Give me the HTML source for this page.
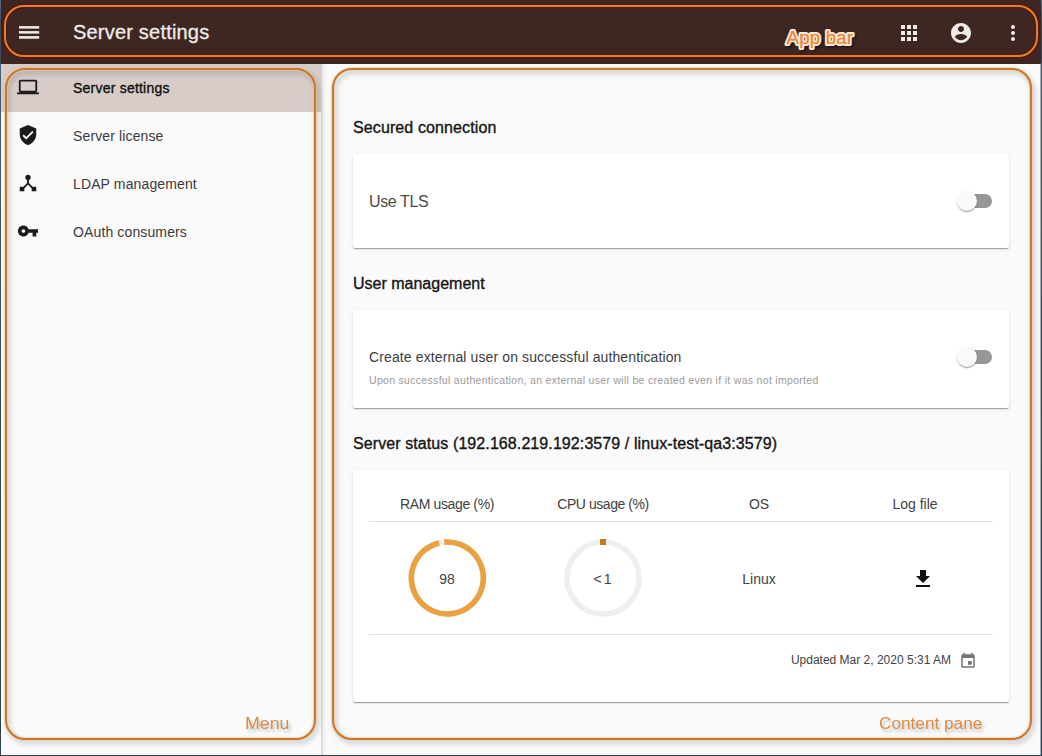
<!DOCTYPE html>
<html lang="en">
<head>
<meta charset="utf-8">
<title>Server settings</title>
<style>
*{box-sizing:border-box;margin:0;padding:0}
html,body{width:1042px;height:756px;overflow:hidden}
body{position:relative;background:#fafafa;font-family:"Liberation Sans",Arial,sans-serif;color:#212121}
.abs{position:absolute}
.t{position:absolute;white-space:nowrap;line-height:1;transform-origin:0 50%}
/* frame */
#frame{left:0;top:0;width:1042px;height:756px;border:1px solid #2f4858;border-top:none;border-image:linear-gradient(to bottom,#5a6f88 0,#3f4d62 3%,#3c4a5e 8.400%,#456079 8.500%,#3a566c 30%,#2f4858 70%,#2c4250 100%) 1;z-index:50;pointer-events:none}
#frame-r{left:1040px;top:0;width:1px;height:756px;background:rgba(40,56,72,.4);z-index:50}
/* app bar */
#appbar{left:0;top:0;width:1042px;height:64px;background:#3e2723}
#appbar svg{position:absolute;fill:#efebe9}
#title{left:73px;top:22px;font-size:20px;color:#efebe9;letter-spacing:.2px;-webkit-text-stroke:.3px #efebe9}
/* drawer */
#drawer{left:1px;top:64px;width:320px;height:692px;background:#fafafa}
#drawer-edge{left:321px;top:64px;width:6px;height:692px;background:linear-gradient(to right,#d8d6d6 0,#d8d6d6 1px,#e6e6e6 1px,#e6e6e6 2px,#eeeeee 2px,#eeeeee 3px,#f3f3f3 3px,#f3f3f3 4px,#f6f6f6 4px,#f6f6f6 5px,#f8f8f8 5px)}
.item{position:absolute;left:0;width:320px;height:48px}
.item.sel{background:#d7ccc8}
.item svg{position:absolute;left:16px;top:12px;width:22px;height:22px;fill:#1b1b1b}
.item .t{left:72px;top:17px;font-size:14px;color:#3a3a3a;letter-spacing:.13px}
.item.sel .t{color:#111;-webkit-text-stroke:.35px #111;letter-spacing:.22px}
/* outlines */
.ol{position:absolute;border:2px solid #c47a2e;border-radius:20px;box-shadow:0 0 0 1px rgba(248,196,150,.55), inset 0 0 0 1px rgba(248,196,150,.55);filter:drop-shadow(2.500px 3.500px 2.500px rgba(40,50,60,.3));z-index:40;pointer-events:none}
.lbl{position:absolute;white-space:nowrap;line-height:1;color:#dd8a42;z-index:41;text-shadow:2px 3px 3px rgba(0,0,0,.24);font-size:16px;transform-origin:0 50%;transform:scaleX(1.075)}
/* content */
h2.t{font-size:16px;font-weight:normal;color:#151515;-webkit-text-stroke:.35px #151515}
.card{position:absolute;left:353px;width:656px;background:#fff;border-radius:2px;box-shadow:0 2px 1px -1px rgba(0,0,0,.2),0 1px 1px 0 rgba(0,0,0,.14),0 1px 3px 0 rgba(0,0,0,.12)}
.track{position:absolute;left:605px;width:34px;height:14px;border-radius:7px;background:#979797}
.knob{position:absolute;left:604px;width:20px;height:20px;border-radius:50%;background:#fafafa;box-shadow:0 2px 1px -1px rgba(0,0,0,.2),0 1px 1px 0 rgba(0,0,0,.14),0 1px 3px 0 rgba(0,0,0,.12)}
.hr{position:absolute;left:16px;width:624px;height:1px;background:#e0e0e0}
.col{position:absolute;font-size:14px;color:#424242;white-space:nowrap;line-height:1;transform:translateX(-50%)}
</style>
</head>
<body>

<!-- APP BAR -->
<div id="appbar" class="abs">
  <svg style="left:16px;top:20px" width="28" height="24" viewBox="0 0 28 24"><rect x="3" y="6.100" width="20.200" height="2.500"/><rect x="3" y="11.100" width="20.200" height="2.500"/><rect x="3" y="16.100" width="20.200" height="2.600"/></svg>
  <div id="title" class="t">Server settings</div>
  <svg style="left:897px;top:21px" width="24" height="24" viewBox="0 0 24 24"><path d="M4 8h4V4H4v4zm6 12h4v-4h-4v4zm-6 0h4v-4H4v4zm0-6h4v-4H4v4zm6 0h4v-4h-4v4zm6-10v4h4V4h-4zm-6 4h4V4h-4v4zm6 6h4v-4h-4v4zm0 6h4v-4h-4v4z"/></svg>
  <svg style="left:949px;top:21px" width="24" height="24" viewBox="0 0 24 24"><path d="M12 2C6.48 2 2 6.48 2 12s4.480 10 10 10 10-4.480 10-10S17.520 2 12 2zm0 3c1.660 0 3 1.340 3 3s-1.340 3-3 3-3-1.340-3-3 1.340-3 3-3zm0 14.200c-2.500 0-4.710-1.280-6-3.220.030-1.990 4-3.080 6-3.080 1.990 0 5.970 1.090 6 3.080-1.290 1.940-3.500 3.220-6 3.220z"/></svg>
  <svg style="left:1001px;top:21px" width="24" height="24" viewBox="0 0 24 24"><path d="M12 8c1.100 0 2-.9 2-2s-.9-2-2-2-2 .9-2 2 .9 2 2 2zm0 2c-1.100 0-2 .9-2 2s.9 2 2 2 2-.9 2-2-.9-2-2-2zm0 6c-1.100 0-2 .9-2 2s.9 2 2 2 2-.9 2-2-.9-2-2-2z"/></svg>
</div>

<!-- DRAWER -->
<div id="drawer" class="abs">
  <div class="item sel" style="top:0">
    <svg viewBox="0 0 24 24"><path d="M20 18c1.100 0 2-.9 2-2V6c0-1.100-.9-2-2-2H4c-1.100 0-2 .9-2 2v10c0 1.100.9 2 2 2H0v2h24v-2h-4zM4 6h16v10H4V6z"/></svg>
    <div class="t">Server settings</div>
  </div>
  <div class="item" style="top:48px">
    <svg viewBox="0 0 24 24"><path d="M12 1L3 5v6c0 5.550 3.840 10.740 9 12 5.160-1.260 9-6.450 9-12V5l-9-4zm-2 16l-4-4 1.410-1.410L10 14.170l6.590-6.590L18 9l-8 8z"/></svg>
    <div class="t">Server license</div>
  </div>
  <div class="item" style="top:96px">
    <svg viewBox="0 0 24 24"><path d="M17 16l-4-4V8.820C14.160 8.400 15 7.300 15 6c0-1.660-1.340-3-3-3S9 4.340 9 6c0 1.300.84 2.400 2 2.820V12l-4 4H3v5h5v-3.050l4-4.200 4 4.200V21h5v-5h-4z"/></svg>
    <div class="t">LDAP management</div>
  </div>
  <div class="item" style="top:144px">
    <svg viewBox="0 0 24 24"><path d="M12.650 10C11.830 7.670 9.610 6 7 6c-3.310 0-6 2.690-6 6s2.690 6 6 6c2.610 0 4.830-1.670 5.650-4H17v4h4v-4h2v-4H12.650zM7 14c-1.100 0-2-.9-2-2s.9-2 2-2 2 .9 2 2-.9 2-2 2z"/></svg>
    <div class="t">OAuth consumers</div>
  </div>
</div>
<div id="drawer-edge" class="abs"></div>

<!-- CONTENT -->
<h2 class="t" style="left:353px;top:120px;letter-spacing:.11px">Secured connection</h2>
<div class="card" style="top:154px;height:94px">
  <div class="t" style="left:16px;top:40px;font-size:16px;color:#4a4a4a;letter-spacing:-.4px">Use TLS</div>
  <div class="track" style="top:40px"></div><div class="knob" style="top:37px"></div>
</div>

<h2 class="t" style="left:353px;top:276px">User management</h2>
<div class="card" style="top:310px;height:98px">
  <div class="t" style="left:16px;top:40px;font-size:14px;color:#3c3c3c;letter-spacing:.12px">Create external user on successful authentication</div>
  <div class="t" style="left:16px;top:65px;font-size:10.500px;color:#9a9a9a;letter-spacing:.307px">Upon successful authentication, an external user will be created even if it was not imported</div>
  <div class="track" style="top:40px"></div><div class="knob" style="top:37px"></div>
</div>

<h2 class="t" style="left:353px;top:436px;letter-spacing:.09px">Server status (192.168.219.192:3579 / linux-test-qa3:3579)</h2>
<div class="card" style="top:470px;height:232px">
  <div class="col" style="left:94px;top:27px;letter-spacing:-.36px">RAM usage (%)</div>
  <div class="col" style="left:250px;top:27px;letter-spacing:-.45px">CPU usage (%)</div>
  <div class="col" style="left:406px;top:27px">OS</div>
  <div class="col" style="left:562px;top:27px">Log file</div>
  <div class="hr" style="top:51px"></div>
  <svg class="abs" style="left:54px;top:68px" width="80" height="80" viewBox="0 0 80 80">
    <circle cx="40" cy="40" r="36" fill="none" stroke="#efefef" stroke-width="5.600"/>
    <path id="ramarc" fill="none" stroke="#e9a23f" stroke-width="5.600" d="M37.200 4.100 A36 36 0 1 1 32.200 4.900" transform="rotate(0 40 40)"/>
    <text x="40" y="46" font-size="14" text-anchor="middle" fill="#424242" font-family="Liberation Sans, Arial, sans-serif">98</text>
  </svg>
  <svg class="abs" style="left:210px;top:68px" width="80" height="80" viewBox="0 0 80 80">
    <circle cx="40" cy="40" r="36" fill="none" stroke="#efefef" stroke-width="5.600"/>
    <rect x="37" y="1" width="6" height="6" fill="#c17d1d"/>
    <text x="39.500" y="46" font-size="14" text-anchor="middle" fill="#424242" word-spacing="-2" font-family="Liberation Sans, Arial, sans-serif">&lt; 1</text>
  </svg>
  <div class="col" style="left:406px;top:102px">Linux</div>
  <svg class="abs" style="left:558px;top:97px;fill:#111" width="24" height="24" viewBox="0 0 24 24"><path d="M19 9h-4V3H9v6H5l7 7 7-7zM5 18v2h14v-2H5z"/></svg>
  <div class="hr" style="top:164px"></div>
  <div class="t" id="upd" style="right:58px;top:184px;font-size:12px;color:#424242;transform-origin:100% 50%">Updated Mar 2, 2020 5:31 AM</div>
  <svg class="abs" style="left:606px;top:182px;fill:#757575" width="18" height="18" viewBox="0 0 24 24"><path d="M17 12h-5v5h5v-5zM16 1v2H8V1H6v2H5c-1.110 0-1.990.9-1.990 2L3 19c0 1.100.89 2 2 2h14c1.100 0 2-.9 2-2V5c0-1.100-.9-2-2-2h-1V1h-2zm3 18H5V8h14v11z"/></svg>
</div>

<!-- ANNOTATION OUTLINES -->
<div class="ol" style="left:4px;top:5px;width:1034px;height:52px;border-radius:20px;border-color:#df8038;filter:none;box-shadow:0 0 1px 1.500px #561a02, inset 0 0 1px 1.500px #561a02"></div>
<div class="ol" style="left:5.300px;top:68px;width:311px;height:672px"></div>
<div class="ol" style="left:332px;top:68px;width:700px;height:672px"></div>
<svg class="abs" id="lbl-app" style="left:770px;top:14px;z-index:41;overflow:visible" width="100" height="44" viewBox="0 0 100 44" font-family="Liberation Sans, Arial, sans-serif" font-size="18.600" letter-spacing=".2">
  <text x="18.500" y="32" fill="rgba(0,0,0,.55)" stroke="rgba(0,0,0,.45)" stroke-width="3" stroke-linejoin="round" style="filter:blur(1.200px)">App bar</text>
  <text x="16.600" y="29.900" fill="#fff0df" stroke="#fff0df" stroke-width="4" stroke-linejoin="round">App bar</text>
  <text x="16.600" y="29.900" fill="#e98a3a" stroke="#e98a3a" stroke-width=".4">App bar</text>
</svg>
<div class="lbl" style="left:245px;top:716px;transform:scaleX(1.108)">Menu</div>
<div class="lbl" style="left:879px;top:716px">Content pane</div>

<div id="frame" class="abs"></div>
<div id="frame-r" class="abs"></div>
</body>
</html>
